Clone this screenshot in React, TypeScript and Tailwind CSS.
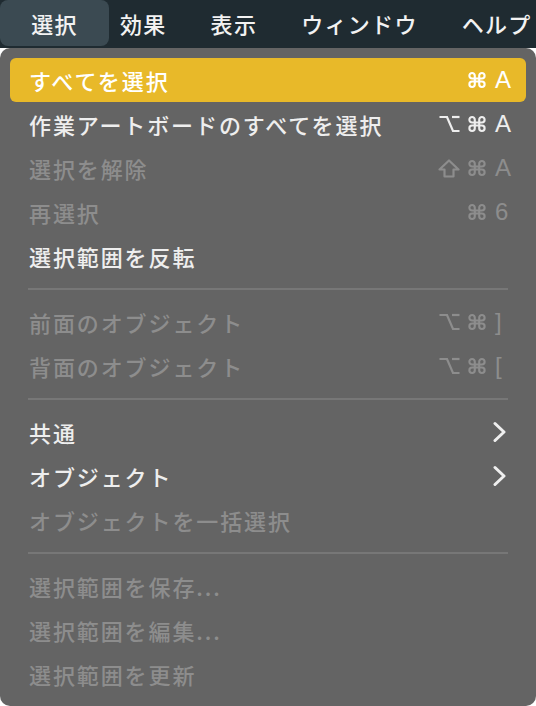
import React from "react";

const JP = { fontFamily: '"Noto Sans CJK JP", "Noto Sans", sans-serif' };
const LAT = { fontFamily: '"Liberation Sans", Arial, sans-serif' };

type Mod = "opt" | "cmd" | "shift" | "";

type Item =
  | { type: "sep" }
  | {
      type: "item";
      label: string;
      enabled: boolean;
      active?: boolean;
      mods?: [Mod, Mod];
      key?: string;
      sub?: boolean;
    };

const items: Item[] = [
  { type: "item", label: "すべてを選択", enabled: true, active: true, mods: ["", "cmd"], key: "A" },
  { type: "item", label: "作業アートボードのすべてを選択", enabled: true, mods: ["opt", "cmd"], key: "A" },
  { type: "item", label: "選択を解除", enabled: false, mods: ["shift", "cmd"], key: "A" },
  { type: "item", label: "再選択", enabled: false, mods: ["", "cmd"], key: "6" },
  { type: "item", label: "選択範囲を反転", enabled: true },
  { type: "sep" },
  { type: "item", label: "前面のオブジェクト", enabled: false, mods: ["opt", "cmd"], key: "]" },
  { type: "item", label: "背面のオブジェクト", enabled: false, mods: ["opt", "cmd"], key: "[" },
  { type: "sep" },
  { type: "item", label: "共通", enabled: true, sub: true },
  { type: "item", label: "オブジェクト", enabled: true, sub: true },
  { type: "item", label: "オブジェクトを一括選択", enabled: false },
  { type: "sep" },
  { type: "item", label: "選択範囲を保存...", enabled: false },
  { type: "item", label: "選択範囲を編集...", enabled: false },
  { type: "item", label: "選択範囲を更新", enabled: false },
];

function ModIcon({ m }: { m: Mod }) {
  if (m === "cmd") {
    return (
      <svg width="20" height="18" viewBox="0 0 24 22" className="block" fill="none" stroke="currentColor" strokeWidth="2.6">
        <path d="M18 2.5a3.3 3.3 0 0 0-3.3 3.3v10.4a3.3 3.3 0 0 0 3.3 3.3 3.3 3.3 0 0 0 3.3-3.3 3.3 3.3 0 0 0-3.3-3.3H6a3.3 3.3 0 0 0-3.3 3.3 3.3 3.3 0 0 0 3.3 3.3 3.3 3.3 0 0 0 3.3-3.3V5.8A3.3 3.3 0 0 0 6 2.5a3.3 3.3 0 0 0-3.3 3.3A3.3 3.3 0 0 0 6 9.1h12a3.3 3.3 0 0 0 3.3-3.3A3.3 3.3 0 0 0 18 2.5z" />
      </svg>
    );
  }
  if (m === "opt") {
    return (
      <svg width="21" height="18" viewBox="0 0 21 18" className="block" fill="none" stroke="currentColor" strokeWidth="2.2" strokeLinejoin="miter">
        <path d="M0.5 2H8L14 16H20.5" />
        <path d="M13 2H20.5" />
      </svg>
    );
  }
  if (m === "shift") {
    return (
      <svg width="22" height="19" viewBox="0 0 22 19" className="block" fill="none" stroke="currentColor" strokeWidth="2.2" strokeLinejoin="round">
        <path d="M11 1.5L20.5 10.5H15.5V17.5H6.5V10.5H1.5Z" />
      </svg>
    );
  }
  return null;
}

function Chevron() {
  return (
    <svg width="14" height="22" viewBox="0 0 14 22" className="block">
      <polyline
        points="3,2.5 12,11 3,19.5"
        fill="none"
        stroke="#efefef"
        strokeWidth="3"
        strokeLinecap="round"
        strokeLinejoin="round"
      />
    </svg>
  );
}

export default function App() {
  return (
    <div className="w-[536px] h-[706px] bg-white overflow-hidden">
      {/* Menu bar */}
      <div
        className="h-[48px] bg-[#1f2b31] flex items-start text-[22px] text-[#f2f2f2] font-medium tracking-[1.3px]"
        style={JP}
      >
        <div className="w-[109px] h-[46px] rounded-[8px] bg-[#3b4a52] flex items-center justify-center shrink-0">
          選択
        </div>
        <div className="h-[46px] flex items-center gap-[44px] ml-[11px] whitespace-nowrap">
          <span>効果</span>
          <span>表示</span>
          <span>ウィンドウ</span>
          <span>ヘルプ</span>
        </div>
      </div>

      {/* Dropdown panel */}
      <div className="h-[658px] bg-[#646464] rounded-[10px] px-[10px] py-[10px] flex flex-col">
        {items.map((it, i) => {
          if (it.type === "sep") {
            return (
              <div key={i} className="h-[22px] flex items-center px-[18px]">
                <div className="h-[2px] w-full bg-[#777777]" />
              </div>
            );
          }
          const color = it.active
            ? "text-[#ffffff]"
            : it.enabled
            ? "text-[#eeeeee]"
            : "text-[#8d8d8d]";
          return (
            <div
              key={i}
              className={`h-[44px] shrink-0 flex items-center pl-[19px] rounded-[6px] ${
                it.sub ? "pr-[20px]" : "pr-[13px]"
              } ${it.active ? "bg-[#e8b929]" : ""} ${color}`}
            >
              <span
                className="flex-1 text-[22px] font-medium tracking-[1.9px] whitespace-nowrap leading-none"
                style={JP}
              >
                {it.label}
              </span>
              {it.mods && (
                <div className="flex items-center h-full">
                  <span className="w-[22px] flex justify-center">
                    <ModIcon m={it.mods[0]} />
                  </span>
                  <span className="w-[20px] ml-[7px] flex justify-center">
                    <ModIcon m={it.mods[1]} />
                  </span>
                  <span className="w-[18px] ml-[8px] text-left text-[24px] leading-none" style={LAT}>
                    {it.key}
                  </span>
                </div>
              )}
              {it.sub && <Chevron />}
            </div>
          );
        })}
      </div>
    </div>
  );
}
